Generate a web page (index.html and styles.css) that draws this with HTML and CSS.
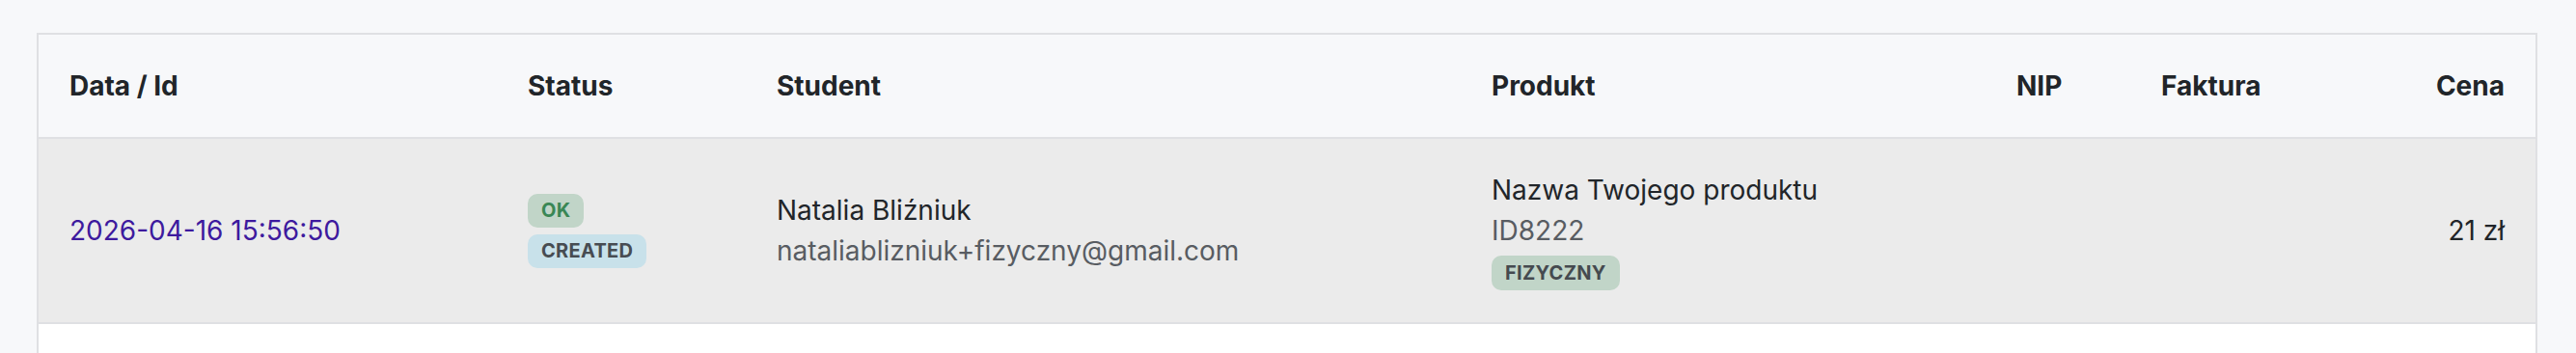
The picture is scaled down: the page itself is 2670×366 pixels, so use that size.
FILE: index.html
```html
<!DOCTYPE html>
<html lang="pl">
<head>
<meta charset="UTF-8" />
<title>Zamówienia</title>
<link rel="stylesheet" href="styles.css">
</head>
<body>
<div class="orders-card">
    <table class="orders-table">
        <colgroup>
            <col class="col-date">
            <col class="col-status">
            <col class="col-student">
            <col class="col-product">
            <col class="col-nip">
            <col class="col-invoice">
            <col class="col-price">
        </colgroup>
        <thead>
            <tr>
                <th>Data / Id</th>
                <th>Status</th>
                <th>Student</th>
                <th>Produkt</th>
                <th>NIP</th>
                <th>Faktura</th>
                <th class="align-right">Cena</th>
            </tr>
        </thead>
        <tbody>
            <tr class="order-row">
                <td><a class="order-date" href="#">2026-04-16 15:56:50</a></td>
                <td>
                    <div class="badge-stack">
                        <span class="badge badge-ok">OK</span>
                        <span class="badge badge-created">CREATED</span>
                    </div>
                </td>
                <td>
                    <div class="student-name">Natalia Bliźniuk</div>
                    <div class="muted">nataliablizniuk+fizyczny@gmail.com</div>
                </td>
                <td>
                    <div class="product-name">Nazwa Twojego produktu</div>
                    <div class="muted">ID8222</div>
                    <span class="badge badge-type">FIZYCZNY</span>
                </td>
                <td></td>
                <td></td>
                <td class="align-right">21 zł</td>
            </tr>
        </tbody>
    </table>
</div>
</body>
</html>
```

FILE: styles.css
```css
/* Base */
* {margin: 0; padding: 0; box-sizing: border-box;}
body {
    font-family: Inter, 'Noto Sans', sans-serif;
    font-size: 28px;
    line-height: 42px;
    color: #212529;
    background: #f7f8fa;
    padding: 34px 40px 0 38px;
}

/* Card with the table */
.orders-card {
    background: #fff;
    border: 2px solid #dfe0e3;
    min-height: 420px;
}
.orders-table {
    width: 100%;
    border-collapse: collapse;
    table-layout: fixed;
}
.col-date {width: 475px;}
.col-status {width: 258px;}
.col-student {width: 741px;}
.col-product {width: 544px;}
.col-nip {width: 150px;}
.col-invoice {width: 200px;}
.col-price {width: 220px;}

.orders-table th,
.orders-table td {
    padding: 32px;
    text-align: left;
    vertical-align: middle;
}
.orders-table thead tr {
    background: #f7f8fa;
    border-bottom: 2px solid #dfe0e3;
}
.orders-table th {
    font-weight: 700;
    color: #212529;
}
.order-row {
    background: #ebebeb;
    border-bottom: 2px solid #dfe0e3;
}
.orders-table .align-right {text-align: right;}

.order-date {
    color: #3d1a9e;
    text-decoration: none;
}
.muted {color: #585c62;}

/* Badges */
.badge-stack {
    display: flex;
    flex-direction: column;
    align-items: flex-start;
    gap: 7px;
}
.badge {
    display: inline-block;
    font-size: 20px;
    font-weight: 700;
    letter-spacing: 0.3px;
    line-height: 35px;
    padding: 0 14px;
    border-radius: 10px;
}
.badge-ok {
    background: #c1d5c8;
    color: #3a8755;
}
.badge-created {
    background: #c8e1ea;
    color: #474c52;
}
.badge-type {
    background: #c1d5c8;
    color: #454a4f;
    margin-top: 5px;
    line-height: 36px;
    vertical-align: top;
}
```
